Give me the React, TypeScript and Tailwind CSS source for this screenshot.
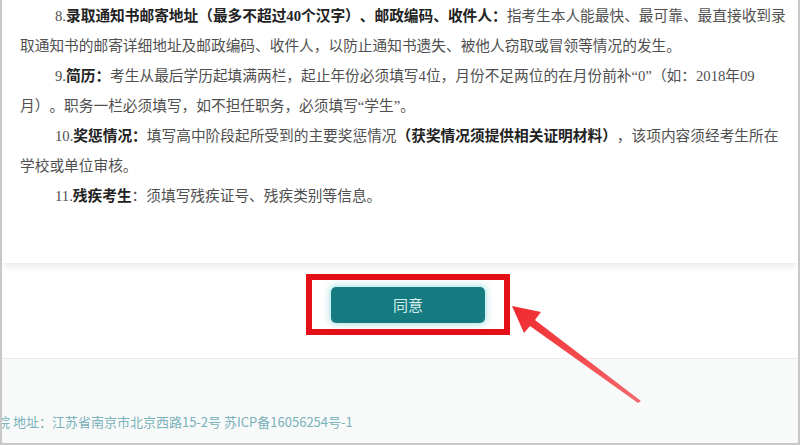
import React from "react";

export default function App() {
  return (
    <div className="relative w-[800px] h-[445px] overflow-hidden bg-white border-l-2 border-r-2 border-b-2 border-[#c8c8c8] flex flex-col">
      <div className="h-[263px] shrink-0 bg-white pl-[18px] pr-[8px] pt-[1px] shadow-[0_5px_8px_-2px_rgba(0,0,0,0.10)] relative z-10 font-['Liberation_Serif','Noto_Sans_CJK_SC',serif] text-[14.7px] leading-[30px] text-[#505050] [text-spacing-trim:space-all]">
        <p className="indent-[35px]">
          8.<b className="font-bold text-[#222]">录取通知书邮寄地址（最多不超过40个汉字）、邮政编码、收件人：</b>指考生本人能最快、最可靠、最直接收到录取通知书的邮寄详细地址及邮政编码、收件人，以防止通知书遗失、被他人窃取或冒领等情况的发生。
        </p>
        <p className="indent-[35px]">
          9.<b className="font-bold text-[#222]">简历：</b>考生从最后学历起填满两栏，起止年份必须填写4位，月份不足两位的在月份前补“0”（如：2018年09月）。职务一栏必须填写，如不担任职务，必须填写“学生”。
        </p>
        <p className="indent-[35px]">
          10.<b className="font-bold text-[#222]">奖惩情况：</b>填写高中阶段起所受到的主要奖惩情况<b className="font-bold text-[#222]">（获奖情况须提供相关证明材料）</b>，该项内容须经考生所在学校或单位审核。
        </p>
        <p className="indent-[35px]">
          11.<b className="font-bold text-[#222]">残疾考生</b>：须填写残疾证号、残疾类别等信息。
        </p>
      </div>

      <div className="h-[95px] shrink-0 pt-[11px] pl-[304px] flex items-start bg-white">
        <div className="border-[6px] border-[#e50f17] pt-[7px] pb-[6px] px-[19px]">
          <button className="w-[154px] h-[36px] rounded-[5px] bg-[#167b80] text-[#d6eeef] text-[15px] font-['Noto_Sans_CJK_SC',sans-serif] shadow-[0_0_6px_2px_rgba(120,205,212,0.55)] flex items-center justify-center">
            同意
          </button>
        </div>
      </div>

      <div className="flex-1 border-t border-[#ececec] bg-[#f8f9f9] pt-[53px]">
        <p className="-ml-[5px] text-[13px] leading-[20px] text-[#78b2ba] font-['Noto_Sans_CJK_SC',sans-serif] whitespace-nowrap">
          院 地址：江苏省南京市北京西路15-2号 苏ICP备16056254号-1
        </p>
      </div>

      <svg
        className="absolute left-[-2px] top-0 pointer-events-none z-20"
        width="800"
        height="445"
        viewBox="0 0 800 445"
      >
        <defs>
          <linearGradient id="ag" x1="512" y1="306" x2="640" y2="402" gradientUnits="userSpaceOnUse">
            <stop offset="0" stopColor="#f0292e" />
            <stop offset="1" stopColor="#f56a6d" />
          </linearGradient>
        </defs>
        <polygon
          points="512,306 541,312 535,320 641,401 638,403 530,326 524,333"
          fill="url(#ag)"
        />
      </svg>
    </div>
  );
}
